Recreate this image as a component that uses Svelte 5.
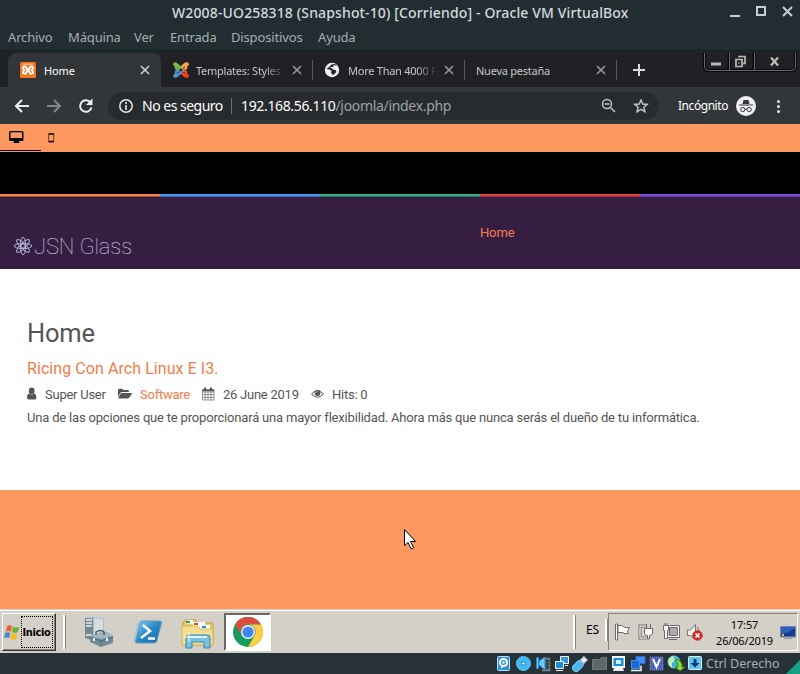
<script>
  const menus = [
    { label: 'Archivo', width: 60 }, { label: 'Máquina', width: 66 },
    { label: 'Ver', width: 36 }, { label: 'Entrada', width: 61 },
    { label: 'Dispositivos', width: 87 }, { label: 'Ayuda', width: 50 }
  ];
  const tabs = [
    { label: 'Home', icon: 'xampp', active: true },
    { label: 'Templates: Styles', icon: 'joomla' },
    { label: 'More Than 4000 F', icon: 'globe' },
    { label: 'Nueva pestaña', icon: '' }
  ];
  const stripes = ['#f5833b', '#4199f4', '#2bb488', '#e43f40', '#7f4be2'];
</script>

<div class="screen">
  <header class="vm">
    <div class="title">
      <span>W2008-UO258318 (Snapshot-10) [Corriendo] - Oracle VM VirtualBox</span>
      <svg width="63" height="16" viewBox="0 0 63 16" fill="none" stroke="#c5d0d4" stroke-width="2">
        <path d="M0 12h10M27 3h8v8h-8zM53 3l9 9M62 3l-9 9" />
      </svg>
    </div>
    <nav class="menu">{#each menus as m}<span style:width="{m.width}px">{m.label}</span>{/each}</nav>
  </header>

  <section class="browser">
    <div class="tabs">
      {#each tabs as t}
        <div class="tab" class:active={t.active}>
          {#if t.icon === 'xampp'}
            <svg class="fav" width="16" height="16" viewBox="0 0 16 16">
              <rect width="16" height="16" rx="1.5" fill="#f37622" />
              <path d="M6.300 6L5.500 4.500H4.200Q3 4.500 3 6q0 1.500 1.500 2Q3 8.500 3 10.200q0 1.500 1.200 1.500h1.300l2-3.200h1l2 3.200h1.300q1.200 0 1.200-1.500Q13 8.500 11.500 8 13 7.500 13 6q0-1.500-1.200-1.500h-1.300L8.500 7.700h-1z" fill="none" stroke="#fff" stroke-width="1.900" stroke-linejoin="round" />
              <path d="M3 2.200h10" stroke="#f9c7a3" stroke-width="1" />
            </svg>
          {:else if t.icon === 'joomla'}
            <svg class="fav" width="16" height="16" viewBox="0 0 16 16" fill="none" stroke-width="2.600" stroke-linecap="round">
              <path d="M2 2.500c2-1 3 1 4 2l4 4M3 3v3l2 2" stroke="#7ac143" />
              <path d="M14 2c-2-1-3 1-4 2L6 8M13 3v3l-2 2" stroke="#f9a541" />
              <path d="M14 14c-2 1-3-1-4-2L6 8M13 13v-3l-2-2" stroke="#f44321" />
              <path d="M2 14c2 1 3-1 4-2l4-4M3 13v-3l2-2" stroke="#5091cd" />
              <path d="M7 5.500l2 2" stroke="#7ac143" />
              <g stroke="none"><circle cx="2.200" cy="2.200" r="2" fill="#7ac143" /><circle cx="13.800" cy="2.200" r="2" fill="#f9a541" /><circle cx="13.800" cy="13.800" r="2" fill="#f44321" /><circle cx="2.200" cy="13.800" r="2" fill="#5091cd" /></g>
              <path d="M8 6.300L9.700 8 8 9.700 6.300 8z" fill="#202124" />
            </svg>
          {:else if t.icon === 'globe'}
            <svg class="fav globe" width="16" height="16" viewBox="0 0 16 16">
              <circle cx="8" cy="8" r="7.200" fill="#f1f1f1" />
              <path d="M2.500 7l3 .5 2 1.500-.5 2 2 2c2-1 2-2 3.500-3l-1-2-2.500-.5-1.500-1.500H5.500L7 5h2l1-2 3 1-2-2-3.500.5L5 5z" fill="#252629" />
            </svg>
          {/if}
          <span class="label">{t.label}</span>
          <svg class="x" width="10" height="10" viewBox="0 0 10 10" stroke={t.active ? '#cfd0d1' : '#96999c'} stroke-width="1.600"><path d="M1 1l8 8M9 1l-8 8" /></svg>
        </div>
      {/each}
      <svg class="plus" width="12" height="12" viewBox="0 0 12 12" stroke="#d9dadb" stroke-width="2"><path d="M0 6h12M6 0v12" /></svg>
      <svg class="winbtns" width="94" height="19" viewBox="0 0 94 19" fill="none">
        <path d="M1.500 0v14q0 3.500 4 3.500h83q4 0 4-3.500V0M26 0v17M51 0v17" stroke="#07080a" stroke-width="3" />
        <path d="M1.500 0v14q0 3.500 4 3.500h83q4 0 4-3.500V0M26.500 0v17M51.500 0v17" stroke="#69696b" />
        <path d="M8 11h10" stroke="#b9b9b9" stroke-width="3" />
        <path d="M33 6.500h6v7h-6zM36 4.500v-1h6v7h-2M36 9.500v1" stroke="#bbb" stroke-width="1.700" />
        <path d="M68 4.500l7 8M75 4.500l-7 8" stroke="#bcbcbc" stroke-width="2.200" />
      </svg>
    </div>

    <div class="toolbar">
      <svg width="80" height="20" viewBox="0 0 80 20" fill="none" stroke-width="2">
        <path d="M14 10H1M7 4l-6 6 6 6" stroke="#eeeff0" />
        <path d="M32 10h13M39 4l6 6-6 6" stroke="#828589" />
        <path d="M75.500 6.500a5.800 5.800 0 1 0 1 5" stroke="#eeeff0" />
        <path d="M77.500 2.500V9H71z" fill="#eeeff0" />
      </svg>
      <div class="omni">
        <svg width="16" height="16" viewBox="0 0 16 16"><circle cx="8" cy="8" r="6.200" fill="none" stroke="#e5e6e7" stroke-width="1.500" /><path d="M8 4v2M8 7v5" stroke="#e5e6e7" stroke-width="1.600" /></svg>
        <span class="unsafe">No es seguro</span><i></i>
        <span class="url"><b>192.168.56.110</b>/joomla/index.php</span>
        <svg width="50" height="16" viewBox="0 0 50 16" fill="none" stroke="#c0c3c6" stroke-width="1.500">
          <circle cx="6" cy="6" r="4.500" /><path d="M9.500 9.500l4.500 4.500M3.500 6h5" />
          <path d="M40 2l1.800 4 4.400.4-3.300 2.900 1 4.300-3.900-2.300-3.900 2.300 1-4.300-3.300-2.900 4.400-.4z" />
        </svg>
      </div>
      <span class="incog">Incógnito</span>
      <svg class="spy" width="48" height="20" viewBox="0 0 48 20">
        <circle cx="10" cy="10" r="10" fill="#eff0f1" />
        <path d="M7.500 4h5l1 4h-7zM3 8.500h14v1H3z" fill="#34373a" />
        <g fill="none" stroke="#34373a"><circle cx="6.800" cy="13.500" r="2.100" /><circle cx="13.200" cy="13.500" r="2.100" /><path d="M9 13.200h2" /></g>
        <g fill="#e8e9ea"><circle cx="42.500" cy="5.500" r="1.500" /><circle cx="42.500" cy="10.500" r="1.500" /><circle cx="42.500" cy="15.500" r="1.500" /></g>
      </svg>
    </div>
  </section>

  <main>
    <div class="devices">
      <span class="device selected"><svg width="15" height="13" viewBox="0 0 15 13"><path d="M1.500 0h11.500q1.500 0 1.500 1.500v7q0 1.500-1.500 1.500H10v1l1 1H4l1-1v-1H1.500Q0 10 0 8.500v-7Q0 0 1.500 0z" fill="#050101" /><path d="M1.500 1.300h11.500V7H1.500z" fill="#fd9860" /></svg></span>
      <span class="device"><svg width="7" height="10" viewBox="0 0 7 10"><rect x=".7" y=".5" width="5" height="8.500" rx=".8" fill="none" stroke="#6b3e28" stroke-width="1" /><path d="M.5 1h5.500M.5 8.500h5.500" stroke="#1b0d08" stroke-width="1.300" /></svg></span>
    </div>
    <div class="black"></div>
    <div class="stripes">{#each stripes as c}<span style:background={c}></span>{/each}</div>
    <div class="hero">
      <div class="logo">
        <svg width="20" height="20" viewBox="-10 -10 20 20" fill="none" stroke="#bcbfe0" stroke-width=".9">
          {#each [0, 45, 90, 135] as a}<ellipse rx="8.800" ry="2.700" transform="rotate({a})" />{/each}<circle r="2" />
        </svg>
        <span>JSN Glass</span>
      </div>
      <a class="nav-home" href="#home">Home</a>
    </div>
    <article>
      <h1>Home</h1>
      <h2>Ricing Con Arch Linux E I3.</h2>
      <div class="meta">
        <svg width="18" height="14" viewBox="0 0 18 14" fill="#555"><ellipse cx="4.700" cy="4" rx="2.900" ry="3.400" /><path d="M2.500 6.500Q4.700 9 7 6.500c2 .3 2.400 2.500 2.400 4.300 0 1-.7 1.700-1.700 1.700h-6C.7 12.500 0 11.800 0 10.800 0 9 .5 6.800 2.500 6.500z" /></svg>
        <span class="user">Super User</span>
        <svg width="22" height="14" viewBox="0 0 22 14" fill="#555"><path d="M0 10V3q0-1.300 1.300-1.300h2.500q1.300 0 1.300 1.300h4.500q1.400 0 1.400 1.400V5H4.200Q3 5 2.300 6z" /><path d="M4 6h9.500q1 0 .3 1l-2.400 3.500q-.7 1-1.800 1H.9q-1 0-.4-1l2-3.500Q3 6 4 6z" /></svg>
        <span class="software">Software</span>
        <svg width="21" height="14" viewBox="0 0 21 14" fill="none" stroke="#555" stroke-width=".6"><path d="M.5 2.500h11.500v10.500H.5zM.5 5h11.500M.5 7.500h11.500M.5 10.300h11.500M3.200 5v8M6 5v8M9 5v8" /><path d="M3.200.5v3M9 .5v3" stroke-width="2" /><path d="M.5 3.500h11.500" stroke-width="1.600" /></svg>
        <span class="date">26 June 2019</span>
        <svg width="21" height="14" viewBox="0 0 21 14"><path d="M.6 7Q6.500-.2 12.400 7 6.500 13.500.6 7z" fill="none" stroke="#555" /><circle cx="6.500" cy="6" r="3" fill="#555" /><path d="M4.800 6q0-1.700 1.700-1.700" fill="none" stroke="#fff" stroke-width=".7" /></svg>
        <span>Hits: 0</span>
      </div>
      <p>Una de las opciones que te proporcionará una mayor flexibilidad. Ahora más que nunca serás el dueño de tu informática.</p>
    </article>
    <div class="desktop"></div>
  </main>

  <footer class="taskbar">
    <button class="start">
      <svg width="17" height="17" viewBox="0 0 16 16"><path d="M3 2q2-1.500 4.500 0L6.300 7.300q-2-1.300-4.600 0z" fill="#e86032" /><path d="M8.500 2.500q3 1.500 6 .2L13 8q-2.900 1-5.700-.5z" fill="#75ad36" /><path d="M1.200 8.300q2.700-1.300 4.800 0L4.700 13.500q-2-1.400-4.700 0z" fill="#4388ce" /><path d="M7 8.700q2.900 1.300 5.800.4L11.300 14.500q-3 1-5.500-.5z" fill="#f4bd28" /></svg>
      <span>Inicio</span>
    </button>
    <i class="grip first"></i>
    <svg class="server" width="32" height="32" viewBox="0 0 32 32">
      <path d="M9 1l11 1v19L8 25 1 22V2z" fill="#aebcc4" /><path d="M1 2l8 .5V24l-8-2z" fill="#748891" /><path d="M2 4h6M2 7h6M2 10h6M2 19h6" stroke="#e7edef" stroke-width="1.300" /><path d="M10 2l9 1v11l-9 6z" fill="#d4dde0" />
      <path d="M6 20l17-4 6 4v7l-12 4-11-5z" fill="#738b98" /><path d="M6 20l17-4 6 4-12 3z" fill="#a4b6be" /><path d="M7 22l10 3 12-4M17 24v6" fill="none" stroke="#526a77" /><path d="M12 19v-3q5-3 8 0v3" fill="none" stroke="#405966" stroke-width="1.400" /><path d="M10 22v3M23 22v3" stroke="#eef4f6" stroke-width="2" />
    </svg>
    <svg class="ps" width="31" height="28" viewBox="0 0 31 28">
      <defs><linearGradient id="psfill" x2="1" y2="1"><stop stop-color="#8dcdf1" /><stop offset=".5" stop-color="#2c87c7" /><stop offset="1" stop-color="#1769a9" /></linearGradient></defs>
      <path d="M4 4h3L4 23H0zM1 8h3" fill="#9bc5de" opacity=".7" /><path d="M9 2h18q2 0 1.500 2l-4.700 18q-.5 2-2.500 2H4q-2 0-1.500-2L7 4q.4-2 2-2z" fill="url(#psfill)" stroke="#5e9fcb" /><path d="M10 6l7 6-9 7M15 19.500h7" fill="none" stroke="#fff" stroke-width="2.500" />
    </svg>
    <svg class="folder" width="34" height="32" viewBox="0 0 34 32">
      <path d="M2 5l2-3h11l2 3h14q1 0 1 2v20H2z" fill="#eac969" stroke="#c49b3b" /><path d="M6 2h6v4H6z" fill="#fff" /><path d="M5 3h4v2H5z" fill="#12b332" /><path d="M12 4h12v5H12z" fill="#fff" /><path d="M13 5h4v2h-4z" fill="#e44436" /><path d="M19 7h10v5H19z" fill="#fff" /><path d="M21 8h4v2h-4z" fill="#2788df" /><path d="M1 8h15l3 3h13v16H1z" fill="#f3de92" stroke="#d7b65c" /><path d="M5 19q0-2 3-2h18q3 0 3 2v11h-6v-6H11v6H5z" fill="#79bfe0" stroke="#338bb6" /><path d="M7 19h19" stroke="#d6f2fc" stroke-width="2" /><path d="M8 14v10M3 19h10" stroke="#fff" />
    </svg>
    <div class="chrome-btn"><svg width="30" height="30" viewBox="0 0 30 30"><circle cx="15" cy="15" r="15" fill="#179b5b" /><path d="M2 7.500A15 15 0 0 1 28 7.500H15a7.500 7.500 0 0 0-6.500 11.200z" fill="#db4b3e" /><path d="M28 7.500A15 15 0 0 1 15 30l6.500-11.200A7.500 7.500 0 0 0 15 7.500z" fill="#ffce43" /><circle cx="15" cy="15" r="7" fill="#f4f6fb" /><circle cx="15" cy="15" r="5.600" fill="#4584ef" /></svg></div>
    <i class="grip second"></i><span class="lang">ES</span><i class="grip small"></i>
    <div class="tray">
      <svg width="90" height="20" viewBox="0 0 90 20" fill="none" stroke="#696969">
        <path d="M1.500 2v16h2V2zM4 3.500q4-1 7 2h4.500l-2 3.500 1 2.500q-4 1-6-1H4z" fill="#fff" />
        <path d="M33 4h-7v12h9" stroke="#777" stroke-width="3" /><path d="M33 4h-7v12h9" stroke="#fff" /><path d="M30.500 6.500h8v5q-1 2-3 2v3h-2v-3q-2 0-3-2zM32.500 2v4M36.500 2v4" fill="#fff" />
        <path d="M55.500 5.500h8v8h-8z" fill="#aaa" stroke="#666" /><path d="M53.500 4.500h11v10h-11z" stroke="#fff" stroke-width="1.200" /><path d="M52.500 3.500h13v12h-13zM55 17.500h8" /><path d="M49.500 3.500h5v5h-1v8h-3v-8h-1zM51 1v3M53 1v3" fill="#fff" />
        <path d="M73.500 8h3l5-5.500v15l-5-4h-3z" fill="#eee" stroke="#777" /><path d="M83.500 5q2 3 0 7" /><circle cx="83.500" cy="13.500" r="4.700" fill="#d72a22" stroke="#b72b27" /><path d="M81.500 11.500l4 4M85.500 11.500l-4 4" stroke="#fff" stroke-width="1.600" />
      </svg>
      <div class="clock"><span>17:57</span><span>26/06/2019</span></div>
      <svg width="16" height="14" viewBox="0 0 16 14"><path d="M.5.500h15v10.500H.5z" fill="#2d61bb" stroke="#75869d" /><path d="M1 8Q9 7 15 2v8H1z" fill="#163d8d" /><path d="M2 8h2v2H2z" fill="#f6c32e" /><path d="M4 12h8v1H4z" fill="#99a0a8" /></svg>
    </div>
  </footer>
  <div class="vm-status">
    <svg class="status-icons" width="208" height="18" viewBox="0 0 208 18">
      <g><rect x=".5" y="1.500" width="12" height="14" rx="1" fill="#2492df" stroke="#b9e1f7" /><circle cx="6.500" cy="7.500" r="3.600" fill="#3299dd" stroke="#fff" stroke-width="2" /><circle cx="6.500" cy="7.500" r="1.200" fill="#fff" /><path d="M4 13l4-3" stroke="#fff" stroke-width="1.500" /></g>
      <g><circle cx="26.500" cy="8.500" r="7" fill="#43b8f2" stroke="#55c5fa" /><circle cx="26.500" cy="8.500" r="1.700" fill="#fff" stroke="#1672ae" /></g>
      <g><path d="M48 3.500h4.500v12H45" fill="#4a555b" stroke="#7d868b" stroke-width="1.500" /><path d="M49 6h4M49 9h4M49 12h4" stroke="#263238" /><path d="M39.500 2.500h2v11h-2zM42 6l6-4v13l-6-5z" fill="#69caf8" stroke="#2489cc" /></g>
      <g stroke="#f2f6f8"><path d="M63.500 1.500h8v7h-8z" fill="#3598e0" /><path d="M58.500 6.500h8v7h-8z" fill="#208bdc" /><path d="M59 15.500h7M68 10.500h3" /></g>
      <g transform="translate(83 9) rotate(45)"><rect x="-3.500" y="-3" width="7" height="12" rx="3.500" fill="#4ab8ef" stroke="#79d0f7" /><path d="M-2.500-8h5v5h-5z" fill="#eee" stroke="#a6aeb2" /></g>
      <path d="M95.500 4.500h7l2-2h5v12h-14z" fill="#5f676b" stroke="#71787c" />
      <g><rect x="115.500" y="1.500" width="12" height="11" fill="#e9f3fb" stroke="#f4f8fa" /><path d="M116.500 3h10v8h-10z" fill="#168edb" /><path d="M119 5h5v4h-5z" fill="#d5f1fb" /><path d="M117 13h9l1 3h-11z" fill="#eee" /></g>
      <g><path d="M139 1.500h9v7h-9z" fill="#448ff2" stroke="#3168d9" /><path d="M134.500 5.500h8v8h-8z" fill="#166ad9" stroke="#458de4" /><path d="M134 15.500h10v-5" fill="none" stroke="#f2f5f8" stroke-width="1.500" /></g>
      <g><path d="M153 2h13v13h-13z" fill="#4c62be" stroke="#858fd0" stroke-dasharray="1 1" /><path d="M156 4l3.500 8L163 4" fill="none" stroke="#fff" stroke-width="2" /></g>
      <g><circle cx="177" cy="7" r="6" fill="#3fb2dd" stroke="#7bd1ed" /><path d="M172 3l4-2 2 4-3 3v5q-5-3-3-10" fill="#c3ecb0" /><path d="M178 5h4l3 4v3h3l-5 4-5-4h3V9z" fill="#91dc28" stroke="#31861a" /></g>
      <g><rect x="191.500" y="1.500" width="13" height="13" rx="1" fill="#5cc7f4" stroke="#dff3fb" /><path d="M196.500 4h3v4h3l-4.500 4.500-4.500-4.500h3z" fill="#063b6d" /></g>
    </svg>
    <span>Ctrl Derecho</span><svg class="corner" width="14" height="14" viewBox="0 0 14 14"><path d="M14 0v14H0z" fill="#16a085" /></svg>
  </div>
  <svg class="cursor" width="14" height="23" viewBox="0 0 14 23"><path d="M1.500 1.500v16l3.500-3 3 6q1.500 1 2.500-1l-3-6h5z" fill="#fff" stroke="#000" /></svg>
</div>

<style>
  :global(body) { margin: 0; }
  svg { display: block; flex-shrink: 0; }
  .screen { position: relative; width: 800px; height: 674px; overflow: hidden; font-family: "Noto Sans", sans-serif; }
  .screen span { white-space: nowrap; }
  .vm { height: 50px; background: #222d32; border-bottom: 1px solid #151e22; }
  .title { height: 24px; display: flex; align-items: center; justify-content: space-between; padding: 0 7px 0 172px; color: #d2dade; font-size: 14px; font-weight: 500; letter-spacing: .14px; }
  .menu { display: flex; height: 26px; align-items: center; padding-left: 8px; color: #a5afb3; font-size: 13px; letter-spacing: -.15px; }
  .menu span { flex-shrink: 0; }
  .browser { height: 73px; background: #202124; color: #fff; }
  .tabs { height: 36px; display: flex; padding-left: 8px; border-top: 1px solid #1e292f; box-sizing: border-box; align-items: flex-end; }
  .tab { display: flex; box-sizing: border-box; align-items: center; width: 152px; height: 34px; padding: 0 11px; color: #c3c7ca; font-size: 11px; position: relative; letter-spacing: -.25px; }
  .tab.active { width: 153px; background: #323639; color: #fff; border-radius: 8px 8px 0 0; letter-spacing: -.1px; }
  .tab:not(.active)::after { content: ''; position: absolute; right: 0; top: 7px; height: 20px; width: 1px; background: #55575b; }
  .fav { margin: 0 7px 0 1px; }
  .active .fav { margin-right: 8px; }
  .globe { margin: 0 8px 0 0; }
  .tab .label { flex: 1; min-width: 0; margin-right: 7px; mask-image: linear-gradient(90deg, #000 calc(100% - 20px), transparent); }
  .tab.active .label, .tab .label:first-child { mask-image: none; }
  .plus { margin: 0 60px 11px 16px; }
  .winbtns { align-self: flex-start; margin: 1px 0 0 -2px; }
  .toolbar { height: 37px; display: flex; align-items: center; padding-left: 15px; background: #323639; }
  .omni { width: 551px; height: 28px; margin-left: 13px; border-radius: 14px; background: #282b2e; display: flex; align-items: center; padding-left: 10px; box-sizing: border-box; font-size: 14px; flex-shrink: 0; }
  .unsafe { width: 81px; margin-left: 8px; letter-spacing: -.5px; }
  .omni i { width: 1px; height: 16px; background: #6b6e71; margin: 0 8px; }
  .url { width: 361px; color: #9ca1a6; letter-spacing: -.32px; text-indent: 1px; }
  .url b { color: #fff; font-weight: 400; letter-spacing: -.35px; }
  .incog { width: 51px; margin: -1px 0 0 19px; font-size: 12px; letter-spacing: -.45px; }
  .spy { margin-left: 7px; }
  main { height: 485px; }
  .devices { height: 28px; display: flex; background: #fd9860; }
  .device { width: 41px; height: 28px; display: flex; align-items: center; box-sizing: border-box; padding-left: 7px; }
  .selected { padding-left: 9px; border-bottom: 1px solid #000; height: 27px; }
  .black { height: 42px; background: #000; }
  .stripes { display: grid; grid-template-columns: repeat(5, 1fr); height: 3px; }
  .stripes span { box-shadow: inset 0 -1px #351e4370; }
  .hero { height: 72px; display: flex; background: #351e42; font-family: Roboto, sans-serif; }
  .logo { display: flex; width: 480px; box-sizing: border-box; padding: 39px 0 0 13px; }
  .logo span { font-size: 22px; line-height: 21px; font-weight: 100; margin-left: 1px; color: #d6cee4; letter-spacing: -.12px; }
  .nav-home { padding-top: 28px; color: #fb7c4b; font-size: 13px; line-height: 16px; text-decoration: none; letter-spacing: -.15px; }
  article { height: 221px; box-sizing: border-box; padding: 48px 27px 0; background: #fff; color: #555; font-family: Roboto, sans-serif; }
  h1 { margin: 0; font-size: 25.500px; line-height: 32px; font-weight: 400; letter-spacing: -.2px; }
  h2 { margin: 10px 0 5px; font-size: 16px; line-height: 20px; font-weight: 400; color: #f57b49; letter-spacing: .07px; }
  .meta { display: flex; align-items: center; height: 20px; font-size: 13px; letter-spacing: -.25px; }
  .user { width: 73px; } .software { width: 62px; color: #f57b49; } .date { width: 88px; }
  p { margin: 5px 0 0; font-size: 13px; line-height: 18px; white-space: nowrap; letter-spacing: -.187px; }
  .desktop { height: 119px; background: #fd9860; }
  .taskbar { height: 44px; display: flex; background: #d4d0c8; box-sizing: border-box; border-top: 1px solid #d4d0c8; box-shadow: inset 0 1px #fff; align-items: flex-start; }
  .taskbar > * { flex-shrink: 0; }
  .start { width: 54px; height: 38px; margin: 3px 0 0 2px; padding: 0 1px; background: #d4d0c8; border: 1px solid; border-color: #fff #333 #333 #fff; box-shadow: inset -1px -1px #85827d; display: flex; align-items: center; color: #000; font: 700 11px "DejaVu Sans Condensed", sans-serif; letter-spacing: -.35px; }
  .start span { border: 1px dotted #000; height: 32px; line-height: 31px; width: 32px; box-sizing: border-box; text-indent: -1px; }
  .grip { width: 1px; height: 34px; background: #85827d; border-left: 2px solid #fff; margin: 5px 0 0 7px; }
  .server { margin: 6px 0 0 18px; } .ps { margin: 9px 0 0 17px; } .folder { margin: 8px 0 0 17px; }
  .chrome-btn { width: 47px; height: 38px; box-sizing: border-box; background: #fff; border: 2px solid; border-color: #6a6864 #fff #fff #6a6864; margin: 3px 0 0 9px; display: flex; justify-content: center; align-items: center; }
  .second { margin-left: 302px; } .small { height: 22px; margin: 9px 0 0 2px; }
  .lang { width: 17px; margin: 12px 0 0 10px; font-size: 12px; line-height: 16px; letter-spacing: -.1px; }
  .tray { display: flex; margin: 3px 0 0 0; box-sizing: border-box; border: 1px solid; border-color: #85827d #fff #fff #85827d; width: 190px; height: 38px; align-items: center; padding-left: 5px; }
  .clock { display: flex; flex-direction: column; align-items: center; width: 57px; margin: 1px 0 0 12px; font-size: 11px; line-height: 16px; letter-spacing: -.15px; }
  .clock + svg { margin: 2px 0 0 7px; }
  .vm-status { height: 21px; display: flex; align-items: center; background: #263238; color: #a6b0b4; padding-left: 497px; font-size: 12.500px; box-sizing: border-box; }
  .vm-status span { width: 75px; margin-left: 1px; }
  .corner { margin-left: 5px; align-self: flex-end; }
  .cursor { position: absolute; left: 403px; top: 528px; }
</style>
